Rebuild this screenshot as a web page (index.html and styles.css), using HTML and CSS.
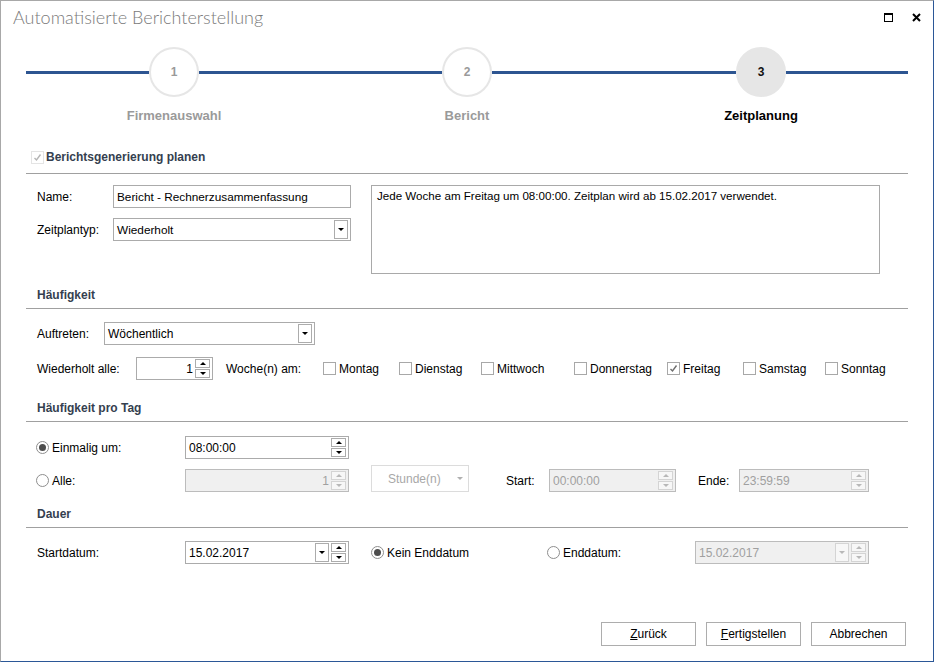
FILE: index.html
```html
<!DOCTYPE html>
<html lang="de">
<head>
<meta charset="utf-8">
<title>Automatisierte Berichterstellung</title>
<link rel="stylesheet" href="styles.css">
</head>
<body>
<div class="window">
  <header class="titlebar">
    <div class="title">Automatisierte Berichterstellung</div>
    <div class="winctrls">
      <span class="ctrl-max"></span>
      <svg class="ctrl-close" width="9" height="9" viewBox="0 0 9 9"><path d="M1 1 L8 8 M8 1 L1 8" stroke="#000" stroke-width="2" fill="none"/></svg>
    </div>
  </header>

  <div class="stepper">
    <div class="seg seg-a"></div>
    <div class="step"><div class="circle">1</div><div class="step-label">Firmenauswahl</div></div>
    <div class="seg seg-b"></div>
    <div class="step"><div class="circle">2</div><div class="step-label">Bericht</div></div>
    <div class="seg seg-c"></div>
    <div class="step active"><div class="circle">3</div><div class="step-label">Zeitplanung</div></div>
    <div class="seg seg-d"></div>
  </div>

  <main class="content">
    <div class="section-head check-head">
      <span class="cb cb-faint"><svg width="11" height="11" viewBox="0 0 11 11"><path d="M2.5 6 L4.5 8 L8.5 2.5" stroke="#b5b5b5" stroke-width="1.4" fill="none"/></svg></span>
      <span>Berichtsgenerierung planen</span>
    </div>

    <div class="general">
      <div class="general-fields">
        <div class="row">
          <span class="lbl lbl-name">Name:</span>
          <div class="field f-name"><span class="val">Bericht - Rechnerzusammenfassung</span></div>
        </div>
        <div class="row">
          <span class="lbl lbl-name">Zeitplantyp:</span>
          <div class="field f-name"><span class="val">Wiederholt</span><span class="dd-btn"><i class="tri-down"></i></span></div>
        </div>
      </div>
      <div class="summary">Jede Woche am Freitag um 08:00:00. Zeitplan wird ab 15.02.2017 verwendet.</div>
    </div>

    <div class="section-head">Häufigkeit</div>
    <div class="row row-first">
      <span class="lbl lbl-auftreten">Auftreten:</span>
      <div class="field f-auftreten"><span class="val">Wöchentlich</span><span class="dd-btn"><i class="tri-down"></i></span></div>
    </div>
    <div class="row row-next">
      <span class="lbl lbl-wdh">Wiederholt alle:</span>
      <div class="field f-wdh"><span class="val num">1</span><span class="spin"><b><i class="tri-up"></i></b><b><i class="tri-down"></i></b></span></div>
      <span class="lbl lbl-woche">Woche(n) am:</span>
      <div class="days">
        <span class="opt"><span class="cb"></span>Montag</span>
        <span class="opt"><span class="cb"></span>Dienstag</span>
        <span class="opt"><span class="cb"></span>Mittwoch</span>
        <span class="opt"><span class="cb"></span>Donnerstag</span>
        <span class="opt"><span class="cb"><svg width="11" height="11" viewBox="0 0 11 11"><path d="M2.5 6 L4.5 8 L8.5 2.5" stroke="#6e6e6e" stroke-width="1.4" fill="none"/></svg></span>Freitag</span>
        <span class="opt"><span class="cb"></span>Samstag</span>
        <span class="opt"><span class="cb"></span>Sonntag</span>
      </div>
    </div>

    <div class="section-head head-gap">Häufigkeit pro Tag</div>
    <div class="row row-once">
      <span class="opt opt-left"><span class="rb on"></span>Einmalig um:</span>
      <div class="field f-time"><span class="val">08:00:00</span><span class="spin"><b><i class="tri-up"></i></b><b><i class="tri-down"></i></b></span></div>
    </div>
    <div class="row row-all">
      <span class="opt opt-left"><span class="rb"></span>Alle:</span>
      <div class="field f-time disabled"><span class="val num">1</span><span class="spin"><b><i class="tri-up"></i></b><b><i class="tri-down"></i></b></span></div>
      <div class="combo-flat"><span>Stunde(n)</span><i class="tri-down"></i></div>
      <span class="lbl lbl-start">Start:</span>
      <div class="field f-start disabled"><span class="val">00:00:00</span><span class="spin"><b><i class="tri-up"></i></b><b><i class="tri-down"></i></b></span></div>
      <span class="lbl lbl-ende">Ende:</span>
      <div class="field f-ende disabled"><span class="val">23:59:59</span><span class="spin"><b><i class="tri-up"></i></b><b><i class="tri-down"></i></b></span></div>
    </div>

    <div class="section-head head-gap2">Dauer</div>
    <div class="row row-first">
      <span class="lbl lbl-start-date">Startdatum:</span>
      <div class="field f-time"><span class="val">15.02.2017</span><span class="dd-btn dd-small"><i class="tri-down"></i></span><span class="spin"><b><i class="tri-up"></i></b><b><i class="tri-down"></i></b></span></div>
      <span class="opt opt-kein"><span class="rb on"></span>Kein Enddatum</span>
      <span class="opt opt-end"><span class="rb"></span>Enddatum:</span>
      <div class="field f-enddate disabled"><span class="val">15.02.2017</span><span class="dd-btn dd-small"><i class="tri-down"></i></span><span class="spin"><b><i class="tri-up"></i></b><b><i class="tri-down"></i></b></span></div>
    </div>
  </main>

  <footer class="buttons">
    <button class="btn"><u>Z</u>urück</button>
    <button class="btn"><u>F</u>ertigstellen</button>
    <button class="btn">Abbrechen</button>
  </footer>
</div>
</body>
</html>
```

FILE: styles.css
```css
* { box-sizing: border-box; }
html, body { margin: 0; padding: 0; background: #fff; }
body {
  font-family: "Liberation Sans", Arial, sans-serif;
  font-size: 12px;
  color: #000;
}
.window {
  width: 934px;
  height: 662px;
  border-top: 1px solid #a8a8a8;
  border-left: 1px solid #a8a8a8;
  border-right: 1px solid #2b5797;
  border-bottom: 1px solid #2b5797;
  display: flex;
  flex-direction: column;
  background: #fff;
}

/* title bar */
.titlebar {
  height: 36px;
  display: flex;
  align-items: center;
  justify-content: space-between;
  padding: 0 11px 0 12px;
}
.title {
  font-family: Lato, "Liberation Sans", sans-serif;
  font-weight: 300;
  font-size: 18px;
  color: #7a7a7a;
  margin-top: -4px;
}
.winctrls { display: flex; align-items: center; gap: 19px; margin-top: -3px; margin-right: 1px; }
.ctrl-max {
  width: 9px; height: 9px;
  border: 1px solid #000;
  border-top-width: 2px;
}
.ctrl-close { display: block; }

/* stepper */
.stepper {
  display: flex;
  align-items: flex-start;
  padding: 10px 0 0 25px;
}
.seg { height: 3px; background: #2d5591; margin-top: 24px; }
.seg-a { width: 123px; }
.seg-b { width: 243px; }
.seg-c { width: 244px; }
.seg-d { width: 122px; }
.step {
  width: 50px;
  display: flex;
  flex-direction: column;
  align-items: center;
}
.circle {
  width: 50px; height: 50px;
  border-radius: 50%;
  border: 2px solid #e6e6e6;
  background: #fff;
  display: flex; align-items: center; justify-content: center;
  font-weight: bold;
  font-size: 12px;
  color: #9a9a9a;
}
.step-label {
  margin-top: 11px;
  line-height: 16px;
  font-size: 13px;
  font-weight: bold;
  color: #9a9a9a;
  white-space: nowrap;
}
.step.active .circle { background: #e6e6e6; color: #111; border-color: #e6e6e6; }
.step.active .step-label { color: #000; }

/* content */
.content { margin: 0 25px; }
.section-head {
  line-height: 16px;
  padding: 0 0 5px 11px;
  border-bottom: 1px solid #a0a0a0;
  font-weight: bold;
  color: #353f4f;
  margin-top: 13px;
}
.check-head {
  margin-top: 25px;
  padding-left: 5px;
  padding-bottom: 8px;
  display: flex;
  align-items: center;
  gap: 2px;
}
.head-gap { margin-top: 20px; }
.head-gap2 { margin-top: 14px; }

.row {
  display: flex;
  align-items: center;
  height: 23px;
  padding-left: 11px;
}
.row-first { margin-top: 13px; }
.row-next { margin-top: 12px; }
.row-once { margin-top: 14px; padding-left: 10px; }
.row-all { margin-top: 6px; padding-left: 10px; height: 27px; align-items: flex-end; }
.row-all > .opt, .row-all > .lbl { height: 23px; }

.lbl { display: flex; align-items: center; flex: none; }
.lbl-name { width: 76px; }
.lbl-auftreten { width: 67px; }
.lbl-wdh { width: 99px; }
.lbl-woche { width: 97px; margin-left: 13px; }
.lbl-start { width: 43px; margin-left: 37px; }
.lbl-ende { width: 41px; margin-left: 22px; }
.lbl-start-date { width: 148px; }

/* general */
.general {
  display: flex;
  margin-top: 11px;
  padding-left: 11px;
}
.general-fields { width: 314px; display: flex; flex-direction: column; gap: 10px; }
.general-fields .row { padding-left: 0; }
.f-name .val { font-size: 11.8px; }
.summary {
  margin-left: 20px;
  width: 509px;
  height: 89px;
  border: 1px solid #a9a9a9;
  padding: 2px 5px;
  line-height: 16px;
  font-size: 11.6px;
}

/* fields */
.field {
  flex: none;
  height: 23px;
  border: 1px solid #ababab;
  background: #fff;
  display: flex;
  align-items: center;
  padding: 0 1px 0 3px;
}
.field .val { flex: 1; white-space: nowrap; }
.field .val.num { text-align: right; padding-right: 2px; }
.f-name { width: 238px; }
.f-auftreten { width: 211px; }
.f-wdh { width: 77px; }
.f-time { width: 164px; }
.f-start { width: 127px; }
.f-ende { width: 130px; }
.f-enddate { width: 174px; }
.field.disabled { background: #f0f0f0; border-color: #bcbcbc; color: #a0a0a0; }

.dd-btn {
  width: 14px; height: 19px;
  border: 1px solid #acacac;
  background: #fff;
  display: flex; align-items: center; justify-content: center;
  margin-right: 1px;
}
.dd-small { margin-right: 2px; }
.spin {
  width: 15px;
  height: 19px;
  display: flex;
  flex-direction: column;
  gap: 1px;
  margin-right: 1px;
}
.spin b {
  flex: 1;
  border: 1px solid #acacac;
  background: #fff;
  display: flex; align-items: center; justify-content: center;
}
.disabled .dd-btn, .disabled .spin b { border-color: #d4d4d4; background: #f7f7f7; }

.tri-down, .tri-up {
  display: block;
  width: 0; height: 0;
  border-left: 3px solid transparent;
  border-right: 3px solid transparent;
}
.tri-down { border-top: 3px solid #000; }
.tri-up { border-bottom: 3px solid #000; }
.disabled .tri-down { border-top-color: #b8b8b8; }
.disabled .tri-up { border-bottom-color: #b8b8b8; }

.combo-flat {
  flex: none;
  width: 98px;
  height: 27px;
  margin-left: 22px;
  border: 1px solid #dcdcdc;
  background: #fff;
  display: flex;
  align-items: center;
  justify-content: space-between;
  padding: 0 5px 0 16px;
  color: #a8a8a8;
}
.combo-flat .tri-down { border-top-color: #b0b0b0; }

/* checkboxes & radios */
.cb {
  flex: none;
  width: 13px; height: 13px;
  border: 1px solid #a8a8a8;
  background: #fff;
  display: flex; align-items: center; justify-content: center;
}
.cb svg { display: block; }
.cb-faint { border-color: #e4e4e4; }

.days {
  display: grid;
  grid-template-columns: 76px 82px 93px 93px 76px 82px auto;
  align-items: center;
}
.opt { display: flex; align-items: center; gap: 3px; white-space: nowrap; flex: none; }
.opt-left { width: 149px; }
.opt-kein { width: 176px; margin-left: 22px; }
.opt-end { width: 148px; }

.rb {
  flex: none;
  width: 13px; height: 13px;
  border-radius: 50%;
  border: 1px solid #8e8e8e;
  background: #fff;
  display: flex; align-items: center; justify-content: center;
}
.rb.on::after {
  content: "";
  width: 7px; height: 7px;
  border-radius: 50%;
  background: #4d4d4d;
}

/* footer */
.buttons {
  margin-top: auto;
  display: flex;
  justify-content: flex-end;
  gap: 10px;
  padding: 0 27px 15px 0;
}
.btn {
  width: 95px;
  height: 24px;
  border: 1px solid #adadad;
  background: #fff;
  font-family: "Liberation Sans", Arial, sans-serif;
  font-size: 12px;
  color: #000;
  padding: 0;
}
```
